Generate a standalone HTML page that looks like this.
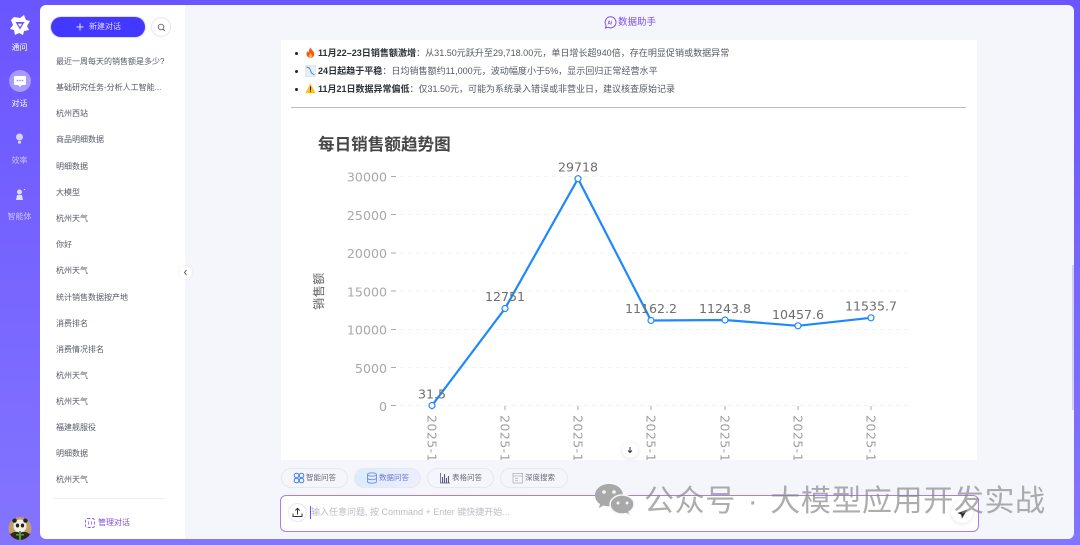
<!DOCTYPE html>
<html lang="zh"><head><meta charset="utf-8"><title>数据助手</title>
<style>
*{box-sizing:border-box;margin:0;padding:0}
html,body{width:1080px;height:545px;overflow:hidden}
body{position:relative;background:linear-gradient(180deg,#6a55ff 0%,#8475ff 100%);font-family:"Liberation Sans","Noto Sans CJK SC",sans-serif}
.a{position:absolute;white-space:nowrap}
.nav{left:0;width:39px;text-align:center;font-size:8px;line-height:12px;color:#fff}
.dim{color:#c9c2ff}
.side{left:40px;top:5px;width:146px;height:534px;background:#fff;border-radius:6px 0 0 6px}
.main{left:185px;top:5px;width:889px;height:534px;background:#f5f6fb;border-radius:0 6px 6px 0}
.it{left:56px;font-size:8px;line-height:13px;color:#555a66}
.ln{left:318px;font-size:9.05px;line-height:13px;color:#555a66}
.ln b{color:#2c3038;font-weight:700}
.dot{width:3px;height:3px;border-radius:50%;background:#222}
.pill{top:468px;height:20px;border-radius:10px;border:1px solid #e6e8f0;font-size:7.5px;line-height:18px;color:#666a75;padding-left:24px}
.pill svg{position:absolute;left:11px;top:3px}
</style></head><body>
<div class="a side"></div>
<div class="a main"></div>

<!-- left nav -->
<svg class="a" style="left:9px;top:14px" width="22" height="22" viewBox="0 0 22 22"><path d="M5 3l6 1 4-3 2 5 4 1-3 5 2 4-5 1-1 4-4-2-4 2-1-5-4-1 3-4-2-5z" fill="#fff"/><path d="M6.500 8h9L11 15.500z" fill="#6a55ff"/><path d="M9 9.800h4L11 13z" fill="#fff"/></svg>
<div class="a nav" style="top:42px">通问</div>
<div class="a" style="left:9px;top:70px;width:22px;height:22px;border-radius:50%;background:#a69bff"></div>
<svg class="a" style="left:13px;top:75px" width="14" height="13" viewBox="0 0 14 13"><path d="M2 1h10a1 1 0 0 1 1 1v7a1 1 0 0 1-1 1H9l-2 2-2-2H2a1 1 0 0 1-1-1V2a1 1 0 0 1 1-1z" fill="#fff"/><circle cx="4.500" cy="5.500" r=".8" fill="#8a7cff"/><circle cx="7" cy="5.500" r=".8" fill="#8a7cff"/><circle cx="9.500" cy="5.500" r=".8" fill="#8a7cff"/></svg>
<div class="a nav" style="top:98px">对话</div>
<svg class="a" style="left:14px;top:132px" width="11" height="13" viewBox="0 0 11 13"><circle cx="5.500" cy="5" r="3.500" fill="#d6d0ff"/><rect x="4" y="9" width="3" height="2.500" fill="#d6d0ff"/></svg>
<div class="a nav dim" style="top:155px">效率</div>
<svg class="a" style="left:14px;top:188px" width="12" height="13" viewBox="0 0 12 13"><circle cx="5.500" cy="4" r="2.500" fill="#e2deff"/><path d="M2 12l1-5h5l1 5z" fill="#e2deff"/><circle cx="10.500" cy="1.500" r=".6" fill="#e2deff"/></svg>
<div class="a nav dim" style="top:211px">智能体</div>
<svg class="a" style="left:8px;top:517px" width="24" height="23" viewBox="0 0 24 23"><defs><clipPath id="c"><circle cx="12" cy="11.500" r="11.500"/></clipPath></defs><g clip-path="url(#c)"><rect width="24" height="23" fill="#bf9f6a"/><path d="M0 23v-5l6-3h12l6 3v5z" fill="#33261c"/><circle cx="12" cy="9" r="6.500" fill="#f2efe8"/><circle cx="6.500" cy="3.500" r="2.300" fill="#2a2420"/><circle cx="17.500" cy="3.500" r="2.300" fill="#2a2420"/><ellipse cx="9.500" cy="8.500" rx="1.700" ry="2" fill="#2a2420"/><ellipse cx="14.500" cy="8.500" rx="1.700" ry="2" fill="#2a2420"/><rect x="11" y="14" width="2" height="9" fill="#46a53f"/><rect x="8" y="17" width="8" height="1.500" fill="#46a53f"/></g></svg>

<!-- sidebar -->
<div class="a" style="left:51px;top:17px;width:94px;height:20px;border-radius:10px;background:#4338ff;box-shadow:0 0 0 1px #dedbff"></div>
<svg class="a" style="left:75px;top:22px" width="10" height="10" viewBox="0 0 10 10"><path d="M5 1.500v7M1.500 5h7" stroke="#e8e6ff" stroke-width="1"/></svg>
<div class="a" style="left:89px;top:21px;font-size:8px;line-height:12px;color:#dcd9ff">新建对话</div>
<div class="a" style="left:151px;top:17px;width:20px;height:20px;border-radius:50%;border:1px solid #e8e8ee;background:#fff"></div>
<svg class="a" style="left:157px;top:23px" width="9" height="9" viewBox="0 0 9 9"><circle cx="4" cy="4" r="2.800" fill="none" stroke="#666" stroke-width=".9"/><path d="M6 6l2 2" stroke="#666" stroke-width=".9"/></svg>

<div class="a it" style="top:55px">最近一周每天的销售额是多少?</div>
<div class="a it" style="top:81px">基础研究任务-分析人工智能...</div>
<div class="a it" style="top:107px">杭州西站</div>
<div class="a it" style="top:133px">商品明细数据</div>
<div class="a it" style="top:160px">明细数据</div>
<div class="a it" style="top:186px">大模型</div>
<div class="a it" style="top:212px">杭州天气</div>
<div class="a it" style="top:238px">你好</div>
<div class="a it" style="top:264px">杭州天气</div>
<div class="a it" style="top:291px">统计销售数据按产地</div>
<div class="a it" style="top:317px">消费排名</div>
<div class="a it" style="top:343px">消费情况排名</div>
<div class="a it" style="top:369px">杭州天气</div>
<div class="a it" style="top:395px">杭州天气</div>
<div class="a it" style="top:421px">福建舰服役</div>
<div class="a it" style="top:447px">明细数据</div>
<div class="a it" style="top:473px">杭州天气</div>
<div class="a" style="left:53px;top:498px;width:112px;height:1px;background:#eeeff3"></div>
<svg class="a" style="left:85px;top:518px" width="10" height="10" viewBox="0 0 10 10"><rect x=".5" y=".5" width="9" height="9" rx="2" fill="none" stroke="#8a5cf5" stroke-width=".9" stroke-dasharray="3 1.500"/><path d="M3.500 3.500v3M6.500 3.500v3" stroke="#8a5cf5" stroke-width=".8"/></svg>
<div class="a" style="left:98px;top:517px;font-size:8px;line-height:12px;color:#7d4df0">管理对话</div>
<div class="a" style="left:179px;top:266px;width:13px;height:13px;border-radius:50%;background:#fff;box-shadow:0 0 3px rgba(0,0,0,.08)"></div>
<svg class="a" style="left:182px;top:269px" width="7" height="7" viewBox="0 0 7 7"><path d="M4.500 1L2.500 3.500 4.500 6" fill="none" stroke="#555" stroke-width=".9"/></svg>

<!-- header -->
<svg class="a" style="left:604px;top:16px" width="13" height="13" viewBox="0 0 13 13"><path d="M6.500 .8a5.500 5.500 0 1 1-2.500 10.400L1.500 12l.6-2.600A5.500 5.500 0 0 1 6.500 .8z" fill="#fff" stroke="#7a4df5" stroke-width="1"/><text x="3.400" y="8.300" font-size="5" font-weight="700" fill="#7a4df5" font-family="Liberation Sans">AI</text></svg>
<div class="a" style="left:618px;top:16px;font-size:9.500px;line-height:13px;color:#7a4df5">数据助手</div>

<!-- content panel -->
<div class="a" style="left:281px;top:40px;width:696px;height:420px;background:#fff"></div>
<div class="a dot" style="left:295px;top:52px"></div>
<div class="a dot" style="left:295px;top:70px"></div>
<div class="a dot" style="left:295px;top:88px"></div>
<svg class="a" style="left:305px;top:47px" width="11" height="12" viewBox="0 0 11 12"><path d="M5.500 .5c.5 2 3.500 3.500 3.800 6.500a3.900 3.900 0 0 1-7.800 0c0-1.500.8-2.300 1.300-3 .2 1 .6 1.300 1 1.500C3.700 3.500 4.500 1.500 5.500 .5z" fill="#f4571c"/><path d="M5.500 6c.3 1 1.700 1.500 1.700 3a1.700 1.700 0 0 1-3.400 0c0-1.300 1.300-1.800 1.700-3z" fill="#fbb03b"/></svg>
<svg class="a" style="left:305px;top:65px" width="11" height="12" viewBox="0 0 11 12"><rect x=".5" y=".5" width="10" height="11" fill="#e9eef3" stroke="#cfd6de" stroke-width=".5"/><path d="M1.500 2l3 1 2 5 3 2" fill="none" stroke="#3f8ed8" stroke-width="1"/></svg>
<svg class="a" style="left:305px;top:83px" width="11" height="11" viewBox="0 0 11 11"><path d="M5.500 .5l5.200 9.800H.3z" fill="#fcc21b"/><rect x="5" y="3.500" width="1" height="4" fill="#222"/><rect x="5" y="8.200" width="1" height="1" fill="#222"/></svg>
<div class="a ln" style="top:47px"><b>11月22–23日销售额激增</b>：从31.50元跃升至29,718.00元，单日增长超940倍，存在明显促销或数据异常</div>
<div class="a ln" style="top:65px"><b>24日起趋于平稳</b>：日均销售额约11,000元，波动幅度小于5%，显示回归正常经营水平</div>
<div class="a ln" style="top:83px;font-size:9px"><b>11月21日数据异常偏低</b>：仅31.50元，可能为系统录入错误或非营业日，建议核查原始记录</div>
<div class="a" style="left:291px;top:107px;width:675px;height:1px;background:#bdbdbd"></div>

<!-- chart -->
<svg class="a" style="left:281px;top:120px" width="696" height="340" viewBox="281 120 696 340" font-family="DejaVu Sans,Liberation Sans,sans-serif">
<text x="318" y="150" font-size="16.600" font-weight="700" fill="#464646" font-family="Liberation Sans,Noto Sans CJK SC,sans-serif">每日销售额趋势图</text>
<g stroke="#f1f1f1" stroke-width="1" stroke-dasharray="4 4">
<path d="M400 176.500H908M400 214.500H908M400 253H908M400 291H908M400 329.500H908M400 367.500H908M400 405.500H908"/>
</g>
<g stroke="#aaa" stroke-width="1">
<path d="M391 176.500h5M391 214.500h5M391 253h5M391 291h5M391 329.500h5M391 367.500h5M391 405.500h5"/>
<path d="M432 406v4M505 406v4M578 406v4M651 406v4M725 406v4M798 406v4M871 406v4"/>
</g>
<g font-size="12.600" fill="#a8a8a8" text-anchor="end">
<text x="387" y="181.500">30000</text><text x="387" y="220">25000</text><text x="387" y="258">20000</text><text x="387" y="296.500">15000</text><text x="387" y="334.500">10000</text><text x="387" y="373">5000</text><text x="387" y="411">0</text>
</g>
<text transform="translate(323 291) rotate(-90)" font-size="12" letter-spacing=".6" fill="#666" text-anchor="middle" font-family="Liberation Sans,Noto Sans CJK SC,sans-serif">销售额</text>
<g font-size="12.600" fill="#a0a0a0" letter-spacing=".4">
<text transform="translate(427.500 415) rotate(90)">2025-1</text><text transform="translate(500.500 415) rotate(90)">2025-1</text><text transform="translate(573.500 415) rotate(90)">2025-1</text><text transform="translate(646.500 415) rotate(90)">2025-1</text><text transform="translate(720.500 415) rotate(90)">2025-1</text><text transform="translate(793.500 415) rotate(90)">2025-1</text><text transform="translate(866.500 415) rotate(90)">2025-1</text>
</g>
<polyline points="432,405.500 505,308.500 578,178.700 651,320.500 725,320 798,325.800 871,317.800" fill="none" stroke="#1e88ff" stroke-width="2.200"/>
<g fill="#fff" stroke="#1e88ff" stroke-width="1.200">
<circle cx="432" cy="405.500" r="3"/><circle cx="505" cy="308.500" r="3"/><circle cx="578" cy="178.700" r="3"/><circle cx="651" cy="320.500" r="3"/><circle cx="725" cy="320" r="3"/><circle cx="798" cy="325.800" r="3"/><circle cx="871" cy="317.800" r="3"/>
</g>
<g font-size="12.600" fill="#6e6e6e" text-anchor="middle">
<text x="432" y="398.500">31.5</text><text x="505" y="301">12751</text><text x="578" y="171.500">29718</text><text x="651" y="313">11162.2</text><text x="725" y="313">11243.8</text><text x="798" y="319">10457.6</text><text x="871" y="310.500">11535.7</text>
</g>
</svg>

<div class="a" style="left:622px;top:442px;width:16px;height:16px;border-radius:50%;background:#fff;box-shadow:0 1px 4px rgba(0,0,0,.12)"></div>
<svg class="a" style="left:626px;top:446px" width="8" height="8" viewBox="0 0 8 8"><path d="M4 1v5M2 4.500L4 6.500 6 4.500" fill="none" stroke="#333" stroke-width="1"/></svg>

<!-- scrollbar -->
<div class="a" style="left:1072px;top:265px;width:2px;height:145px;background:#d3d2f2"></div>

<!-- pills -->
<div class="a pill" style="left:281px;width:67px"><svg width="12" height="12" viewBox="0 0 12 12" fill="none" stroke="#3d7bf5" stroke-width="1"><circle cx="3.500" cy="3.500" r="2.300"/><circle cx="8.500" cy="3.500" r="2.300"/><circle cx="3.500" cy="8.500" r="2.300"/><circle cx="8.500" cy="8.500" r="2.300"/></svg>智能问答</div>
<div class="a pill" style="left:354px;width:67px;background:linear-gradient(90deg,#dcecfd,#eceefd);color:#6a78d8"><svg width="12" height="12" viewBox="0 0 12 12" fill="none" stroke="#6f8de8" stroke-width=".9"><ellipse cx="6" cy="2.500" rx="4.500" ry="1.700"/><path d="M1.500 2.500v7c0 1 2 1.700 4.500 1.700s4.500-.7 4.500-1.700v-7M1.500 6c0 1 2 1.700 4.500 1.700s4.500-.7 4.500-1.700"/></svg>数据问答</div>
<div class="a pill" style="left:427px;width:67px"><svg width="12" height="12" viewBox="0 0 12 12"><path d="M1.500 1v10h9.500" fill="none" stroke="#555a80" stroke-width=".8"/><path d="M3.500 5v6M5.500 2v9M7.500 6v5M9.500 4v7" stroke="#555a80" stroke-width="1.100"/></svg>表格问答</div>
<div class="a pill" style="left:500px;width:68px"><svg width="12" height="12" viewBox="0 0 12 12" fill="none" stroke="#b0b3bb" stroke-width=".8"><rect x="1" y="1.500" width="9.500" height="9.500"/><path d="M1 4h9.500M3 6.500h3M3 8.500h3"/></svg>深度搜索</div>

<!-- input -->
<div class="a" style="left:280px;top:495px;width:699px;height:37px;background:#fff;border-radius:6px;border:1px solid #a47ff2"></div>
<div class="a" style="left:288px;top:503px;width:19px;height:19px;border-radius:50%;border:1px solid #ece6fb;background:#fff"></div>
<svg class="a" style="left:292px;top:507px" width="11" height="11" viewBox="0 0 11 11"><path d="M5.500 7.500V1.500M3.300 3.500L5.500 1.300 7.700 3.500M1 6.500v3h9v-3" fill="none" stroke="#333" stroke-width="1"/></svg>
<div class="a" style="left:310px;top:506px;width:1px;height:13px;background:#6a55ff"></div>
<div class="a" style="left:311px;top:506px;font-size:9px;line-height:13px;color:#bbbdc4">输入任意问题, 按 Command + Enter 键快捷开始...</div>
<div class="a" style="left:951px;top:501px;width:22px;height:22px;border-radius:50%;background:#fff;box-shadow:0 1px 4px rgba(0,0,0,.1)"></div>
<svg class="a" style="left:957px;top:509px" width="11" height="10" viewBox="0 0 11 10"><path d="M10.500 .5L.5 4l3.500 1.500L5 9.500z" fill="#333"/></svg>

<!-- watermark -->
<svg class="a" style="left:594px;top:483px" width="42" height="35" viewBox="0 0 42 35"><path d="M15 1C7 1 1 6 1 12.500c0 3.500 2 6.500 5 8.500l-1 4 4.500-2.500c1.800.5 3.500.8 5.500.8 7.500 0 14-5 14-11C29 6 23 1 15 1z" fill="#a8a8a8"/><path d="M28 12c-6.500 0-12 4.300-12 9.500S21.500 31 28 31c1.400 0 2.800-.2 4-.6l4 2.100-1-3.500c3-1.800 5-4.700 5-8 0-5.200-5.500-9-12-9z" fill="#a8a8a8" stroke="#f5f6fb" stroke-width="1.500"/><g fill="#f5f6fb"><circle cx="10" cy="9" r="1.800"/><circle cx="20" cy="9" r="1.800"/><circle cx="24" cy="20" r="1.500"/><circle cx="33" cy="20" r="1.500"/></g></svg>
<div class="a" style="left:644px;top:484px;font-size:30px;line-height:36px;letter-spacing:.6px;word-spacing:3px;color:rgba(130,130,130,.66)">公众号 · 大模型应用开发实战</div>
</body></html>
